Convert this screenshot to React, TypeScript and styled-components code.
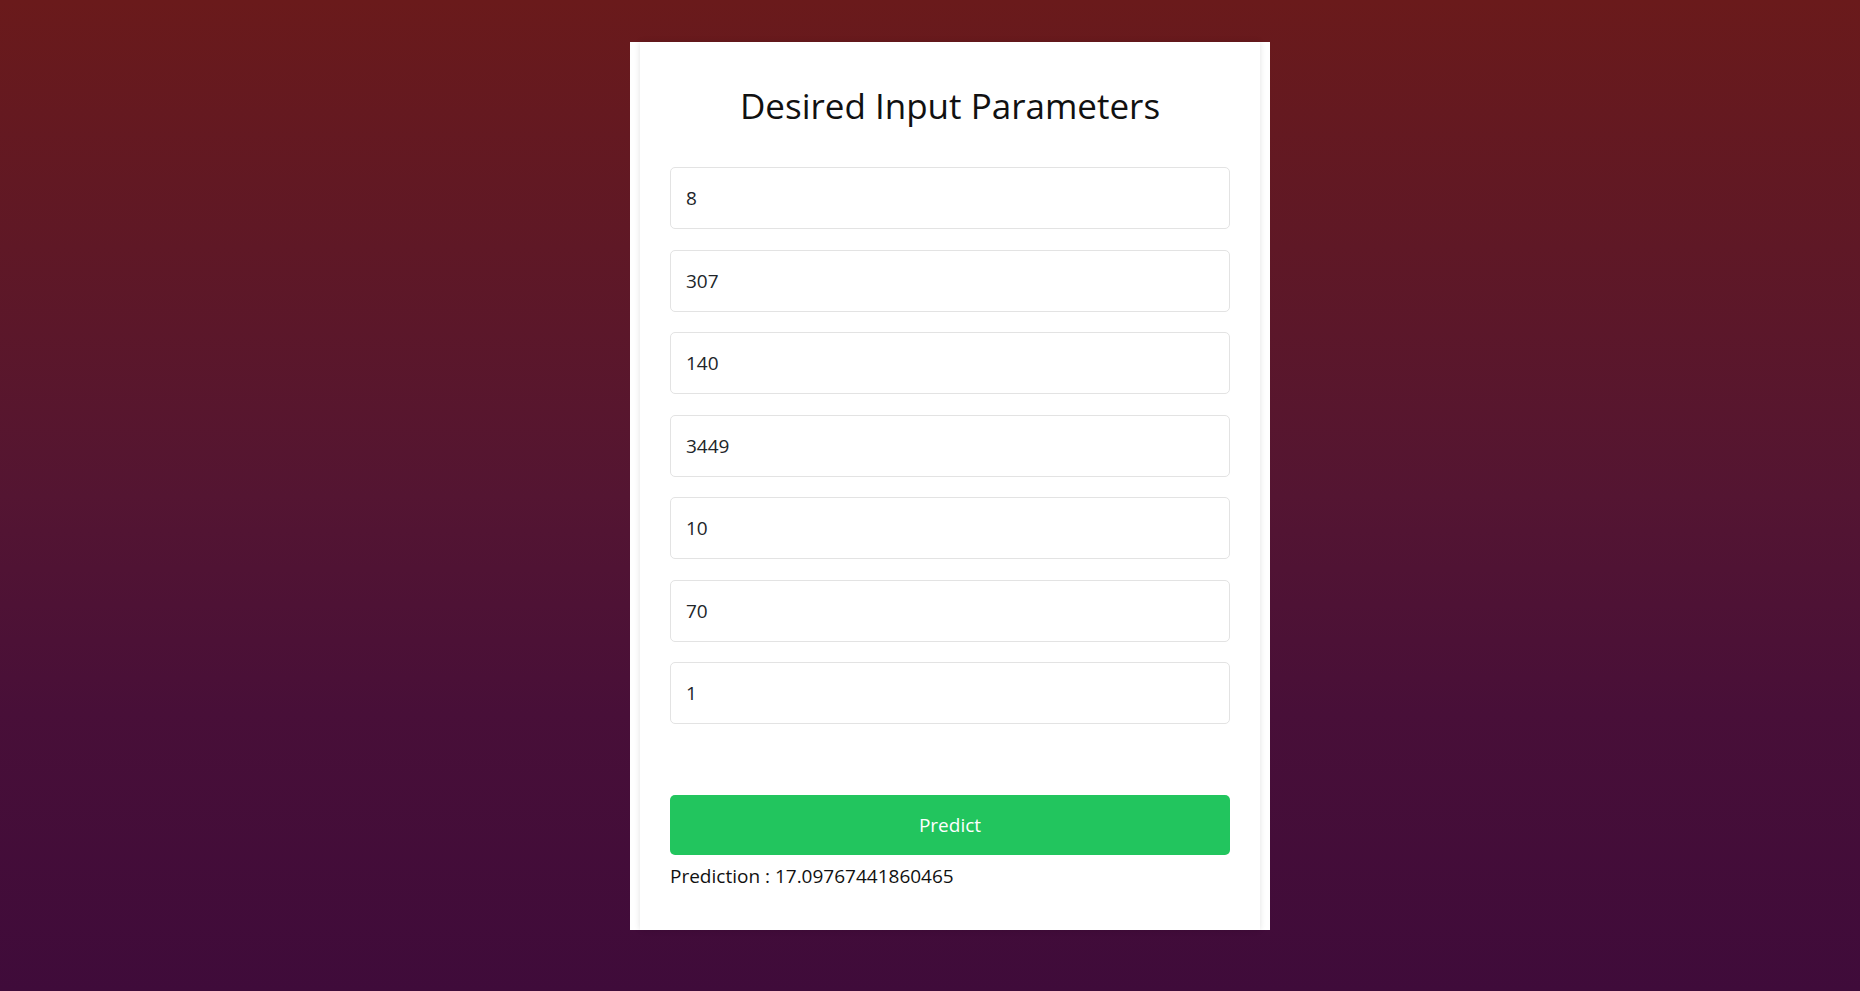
import React from "react";
import styled, { createGlobalStyle } from "styled-components";

const GlobalStyle = createGlobalStyle`
  html, body {
    margin: 0;
    padding: 0;
  }
  body {
    min-height: 991px;
    background: linear-gradient(180deg, #6a1a1b 0%, #5f1826 25%, #541532 50%, #480f38 72%, #3f0b3a 100%);
    font-family: "Open Sans", "Noto Sans", sans-serif;
  }
  * { box-sizing: border-box; }
`;

const Page = styled.main`
  display: flex;
  justify-content: center;
  padding: 42px 0 0 40px;
  min-height: 991px;
`;

const Outer = styled.div`
  width: 640px;
  height: 888px;
  background: #ffffff;
  padding: 0 10px;
  display: flex;
`;

const Card = styled.form`
  flex: 1;
  display: flex;
  flex-direction: column;
  padding: 40px 30px 0;
  box-shadow: 0 0 6px rgba(0, 0, 0, 0.12);
`;

const Title = styled.h1`
  margin: 0 0 37px;
  text-align: center;
  font-weight: 400;
  font-size: 35px;
  line-height: 48px;
  color: #111;
`;

const Fields = styled.div`
  display: flex;
  flex-direction: column;
  gap: 20.5px;
`;

const Field = styled.input`
  height: 62px;
  width: 100%;
  padding: 0 15px;
  border: 1px solid #e3e3e3;
  border-radius: 5px;
  font-family: "Open Sans", "Noto Sans", sans-serif;
  font-size: 19px;
  color: #212529;
  background: #fff;
  outline: none;
`;

const Button = styled.button`
  margin-top: 71px;
  height: 60px;
  width: 100%;
  border: none;
  border-radius: 5px;
  background: #22c55e;
  color: #fff;
  font-family: "Open Sans", "Noto Sans", sans-serif;
  font-size: 19px;
  cursor: pointer;
`;

const Result = styled.p`
  margin: 6px 0 0;
  font-size: 19px;
  line-height: 30px;
  color: #111;
`;

const values = ["8", "307", "140", "3449", "10", "70", "1"];

export default function App() {
  return (
    <>
      <GlobalStyle />
      <Page>
        <Outer>
          <Card onSubmit={(e) => e.preventDefault()}>
            <Title>Desired Input Parameters</Title>
            <Fields>
              {values.map((v, i) => (
                <Field key={i} defaultValue={v} />
              ))}
            </Fields>
            <Button type="submit">Predict</Button>
            <Result>Prediction : 17.09767441860465</Result>
          </Card>
        </Outer>
      </Page>
    </>
  );
}
